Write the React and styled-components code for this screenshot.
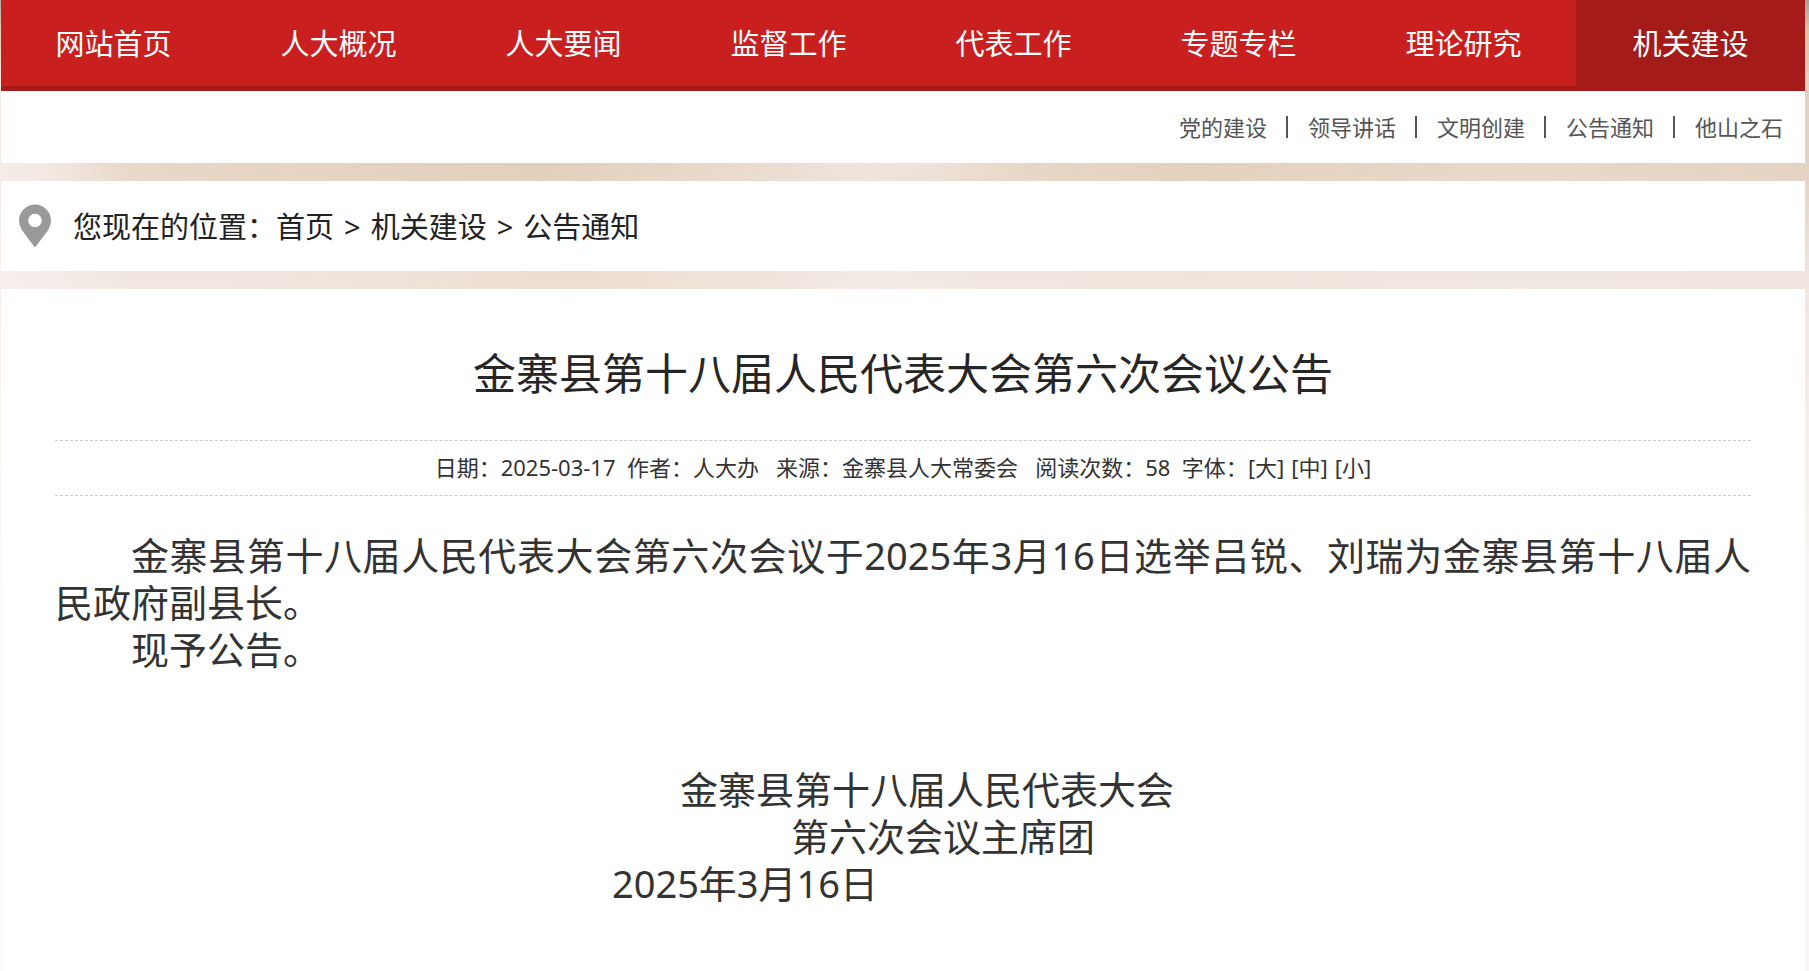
import React from "react";
import styled, { createGlobalStyle } from "styled-components";

const GlobalStyle = createGlobalStyle`
  * { box-sizing: border-box; }
  html { min-height: 100%; }
  body {
    margin: 0;
    color: #333;
    font-family: "Noto Sans", "Noto Sans CJK SC", sans-serif;
    font-size: 22px;
    background:
      radial-gradient(ellipse 16% 40px at 32% 280px, rgba(232, 212, 192, 0.5), transparent),
      radial-gradient(ellipse 7% 30px at 50% 162px, rgba(244, 234, 228, 0.5), transparent),
      linear-gradient(to bottom, rgba(128, 128, 128, 0.6) 0, rgba(214, 176, 130, 0.5) 30px, transparent 90px, transparent 163px, rgba(246, 239, 236, 0.75) 290px, #fbf7f4 600px),
      linear-gradient(to right, #f5ece8 0, #f3e8e2 50px, #e8d7c7 130px, #e1ceba 30%, #e6d5c4 36%, #eee1d8 48%, #e8d8c8 54%, #e3d0bc 66%, #e8d8c9 84%, #e4d2c1 100%);
    background-color: #fbf7f4;
  }
  a { color: inherit; text-decoration: none; }
`;

const Page = styled.div`
  display: flex;
  flex-direction: column;
  gap: 18px;
  min-height: 100vh;
  margin: 0 4px 0 1px;
`;

const Header = styled.header`
  background: #fff;
`;

const MainNav = styled.nav`
  display: flex;
  height: 91px;
  background: linear-gradient(to bottom, #c91f1f 86px, #a51b1a 86px);
`;

const NavLink = styled.a`
  flex: 1 1 ${(p) => (p.$active ? "4px" : "0")};
  display: flex;
  justify-content: center;
  align-items: center;
  padding-bottom: 8px;
  color: #fff;
  font-size: 29px;
  background: ${(p) => (p.$active ? "#a51b1a" : "transparent")};
`;

const SubNav = styled.nav`
  display: flex;
  justify-content: flex-end;
  align-items: center;
  height: 72px;
  padding-right: 22px;
  color: #555;
`;

const SubLink = styled.a`
  display: flex;
  align-items: center;
  line-height: 30px;

  & + &::before {
    content: "";
    width: 2px;
    height: 22px;
    margin: 0 20px 0 19px;
    background: #555;
  }
`;

const Breadcrumb = styled.nav`
  display: flex;
  align-items: center;
  gap: 22px;
  height: 90px;
  padding-left: 18px;
  background: #fff;
  color: #222;
  font-size: 29px;
`;

const Trail = styled.span`
  padding-bottom: 2px;
`;

const Separator = styled.span`
  margin: 0 10px;
`;

const Article = styled.article`
  flex: 1;
  padding: 54px 54px 60px;
  background: #fff;
`;

const Title = styled.h1`
  margin: 0;
  padding-bottom: 35px;
  color: #262626;
  font-size: 43px;
  font-weight: 400;
  line-height: 62px;
  text-align: center;
`;

const Meta = styled.div`
  display: flex;
  justify-content: center;
  align-items: center;
  height: 56px;
  padding-bottom: 4px;
  border-top: 1px dashed #ccc;
  border-bottom: 1px dashed #ccc;
  white-space: pre;
`;

const SizeButton = styled.button`
  margin-left: ${(p) => (p.$first ? 0 : "7px")};
  padding: 0;
  border: 0;
  background: none;
  color: inherit;
  font: inherit;
  cursor: pointer;
`;

const Body = styled.div`
  padding-top: 36px;
  font-size: 38px;
  line-height: 47px;
`;

const Paragraph = styled.p`
  margin: 0;
  text-indent: 2em;
  text-align: justify;
`;

const Signature = styled.footer`
  padding-top: 93px;
`;

const SignLine = styled.p`
  margin: 0;
  padding-left: ${(p) => p.$left || 0}px;
  padding-right: ${(p) => p.$right || 0}px;
  text-align: center;
`;

const NAV = ["网站首页", "人大概况", "人大要闻", "监督工作", "代表工作", "专题专栏", "理论研究", "机关建设"];
const SUB = ["党的建设", "领导讲话", "文明创建", "公告通知", "他山之石"];

function PinIcon() {
  return (
    <svg width="32" height="44" viewBox="0 0 32 44" aria-hidden="true">
      <path
        fill="#999"
        fillRule="evenodd"
        d="M16 .5C7.300 .5 0 7.500 0 16.500c0 4 1.500 7 3.500 10.500L16 43.500 28.500 27c2-3.500 3.500-6.500 3.500-10.500C32 7.500 24.700 .5 16 .5zM16 9.700a6.800 6.800 0 1 1 0 13.600a6.800 6.800 0 0 1 0-13.600z"
      />
    </svg>
  );
}

export default function App() {
  return (
    <>
      <GlobalStyle />
      <Page>
        <Header>
          <MainNav>
            {NAV.map((label) => (
              <NavLink key={label} href="#" $active={label === "机关建设"}>
                {label}
              </NavLink>
            ))}
          </MainNav>
          <SubNav>
            {SUB.map((label) => (
              <SubLink key={label} href="#">{label}</SubLink>
            ))}
          </SubNav>
        </Header>

        <Breadcrumb>
          <PinIcon />
          <Trail>
            您现在的位置：<a href="#">首页</a>
            <Separator>&gt;</Separator>
            <a href="#">机关建设</a>
            <Separator>&gt;</Separator>
            <a href="#">公告通知</a>
          </Trail>
        </Breadcrumb>

        <Article>
          <Title>金寨县第十八届人民代表大会第六次会议公告</Title>
          <Meta>
            <span>{"日期：2025-03-17  作者：人大办   来源：金寨县人大常委会   阅读次数：58  字体："}</span>
            <SizeButton type="button" $first>[大]</SizeButton>
            <SizeButton type="button">[中]</SizeButton>
            <SizeButton type="button">[小]</SizeButton>
          </Meta>
          <Body>
            <Paragraph>
              金寨县第十八届人民代表大会第六次会议于2025年3月16日选举吕锐、刘瑞为金寨县第十八届人民政府副县长。
            </Paragraph>
            <Paragraph>现予公告。</Paragraph>
            <Signature>
              <SignLine $left={48}>金寨县第十八届人民代表大会</SignLine>
              <SignLine $left={80}>第六次会议主席团</SignLine>
              <SignLine $right={316}>2025年3月16日</SignLine>
            </Signature>
          </Body>
        </Article>
      </Page>
    </>
  );
}
